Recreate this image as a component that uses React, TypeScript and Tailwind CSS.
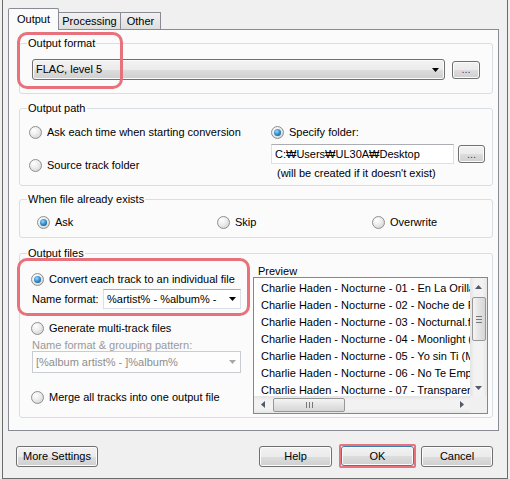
import React from 'react';

const tracks = [
  'Charlie Haden - Nocturne - 01 - En La Orilla del Mundo.flac',
  'Charlie Haden - Nocturne - 02 - Noche de Ronda.flac',
  'Charlie Haden - Nocturne - 03 - Nocturnal.flac',
  'Charlie Haden - Nocturne - 04 - Moonlight (Claro de Luna).flac',
  'Charlie Haden - Nocturne - 05 - Yo sin Ti (Me Without You).flac',
  'Charlie Haden - Nocturne - 06 - No Te Empeñes Más.flac',
  'Charlie Haden - Nocturne - 07 - Transparence.flac',
];

// --- kecil-kecil: tombol, radio, panah ala Windows 7 ---
const btnClass =
  'border border-[#707070] rounded-[3px] bg-[linear-gradient(to_bottom,#f2f2f2_0%,#ebebeb_50%,#dddddd_51%,#cfcfcf_100%)] shadow-[inset_0_0_0_1px_#fbfbfb] flex items-center justify-center leading-none';

const Radio = ({ label, checked = false, className = '' }: { label: string; checked?: boolean; className?: string }) => (
  <div className={`flex items-center h-[13px] ${className}`}>
    <div className="w-[13px] h-[13px] shrink-0 rounded-full border border-[#8f8f8f] bg-[radial-gradient(circle_at_35%_30%,#ffffff_0%,#ececec_45%,#c9c9c9_100%)] flex items-center justify-center">
      {checked && (
        <div className="w-[7px] h-[7px] rounded-full bg-[radial-gradient(circle_at_40%_35%,#9adaf9_0%,#2f8bcf_50%,#123f6a_100%)]" />
      )}
    </div>
    <span className="ml-[5px] leading-[13px] whitespace-nowrap">{label}</span>
  </div>
);

const Arrow = ({ dir = 'down', color = '#000' }: { dir?: 'down' | 'up' | 'left' | 'right'; color?: string }) => {
  const d = {
    down: 'M0 0h7L3.5 4z',
    up: 'M0 4h7L3.5 0z',
    left: 'M4 0v7L0 3.5z',
    right: 'M0 0v7L4 3.5z',
  }[dir];
  const horiz = dir === 'up' || dir === 'down';
  return (
    <svg width={horiz ? 7 : 4} height={horiz ? 4 : 7} viewBox={horiz ? '0 0 7 4' : '0 0 4 7'}>
      <path d={d} fill={color} />
    </svg>
  );
};

const GroupBox = ({ title, className = '', children }: { title: string; className?: string; children: React.ReactNode }) => (
  <div className={`relative w-[474px] border border-[#d5dfe5] rounded-[3px] ${className}`}>
    <span className="absolute left-[7px] top-[-7px] px-[1px] bg-[#fbfbfb] leading-[13px] whitespace-nowrap">{title}</span>
    {children}
  </div>
);

const App: React.FC = () => {
  return (
    <div className="w-[510px] h-[479px] bg-[#f0f0f0] pl-[2px] overflow-hidden text-[11px] text-black font-['Liberation_Sans','DejaVu_Sans','Noto_Sans_CJK_KR',sans-serif]">
      <div className="w-[506px] h-[479px] border-l border-r border-b border-[#6b6b6b] flex flex-col">
        {/* Tabs */}
        <div className="flex items-end h-[21px] mt-[8px] ml-[5px]">
          <div className="relative z-10 w-[51px] h-[22px] -mb-px border border-b-0 border-[#898c95] rounded-t-[2px] bg-[#fbfbfb] flex items-center justify-center">
            Output
          </div>
          <div className="w-[62px] h-[17px] border border-l-0 border-b-0 border-[#898c95] bg-[linear-gradient(to_bottom,#f2f2f2,#dedede)] flex items-center justify-center">
            Processing
          </div>
          <div className="w-[40px] h-[17px] border border-l-0 border-b-0 border-[#898c95] bg-[linear-gradient(to_bottom,#f2f2f2,#dedede)] flex items-center justify-center">
            Other
          </div>
        </div>

        {/* Tab page */}
        <div className="ml-[5px] w-[491px] h-[402px] border border-[#898c95] bg-[#fbfbfb] pl-[10px] pt-[13px] flex flex-col">
          {/* Output format */}
          <GroupBox title="Output format" className="h-[51px]">
            <div className="flex items-center pt-[15px] pl-[12px]">
              <div className={`${btnClass} w-[413px] h-[21px] !justify-between pl-[3px] pr-[5px]`}>
                <span>FLAC, level 5</span>
                <Arrow />
              </div>
              <div className={`${btnClass} ml-[7px] w-[28px] h-[18px] text-[#3a3a8a]`}>...</div>
            </div>
            <div className="absolute left-[-3px] top-[-12px] w-[106px] h-[57px] border-[3px] border-[#e8727b] rounded-[10px]" />
          </GroupBox>

          {/* Output path */}
          <GroupBox title="Output path" className="h-[78px] mt-[14px]">
            <div className="flex">
              <div className="w-[251px] pl-[9px] pt-[17px] flex flex-col">
                <Radio label="Ask each time when starting conversion" />
                <Radio label="Source track folder" className="mt-[20px]" />
              </div>
              <div className="pt-[17px] flex flex-col">
                <Radio label="Specify folder:" checked />
                <div className="flex items-center mt-[5px]">
                  <div className="w-[183px] h-[20px] bg-white border border-[#dbdfe6] border-t-[#abadb3] pl-[3px] flex items-center whitespace-nowrap">
                    C:₩Users₩UL30A₩Desktop
                  </div>
                  <div className={`${btnClass} ml-[4px] w-[27px] h-[18px] text-[#3a3a8a]`}>...</div>
                </div>
                <span className="mt-[3px] pl-[6px] leading-[13px]">(will be created if it doesn't exist)</span>
              </div>
            </div>
          </GroupBox>

          {/* When file already exists */}
          <GroupBox title="When file already exists" className="h-[39px] mt-[13px]">
            <div className="flex items-center pt-[16px] pl-[17px]">
              <Radio label="Ask" checked className="w-[180px]" />
              <Radio label="Skip" className="w-[155px]" />
              <Radio label="Overwrite" />
            </div>
          </GroupBox>

          {/* Output files */}
          <GroupBox title="Output files" className="h-[165px] mt-[15px]">
            <div className="flex">
              <div className="w-[233px] pl-[11px] pt-[19px] flex flex-col">
                <Radio label="Convert each track to an individual file" checked />
                <div className="flex items-center mt-[3px] ml-[1px]">
                  <span className="w-[71px] whitespace-nowrap">Name format:</span>
                  <div className="w-[138px] h-[20px] bg-white border border-[#dbdfe6] border-t-[#abadb3] pl-[3px] pr-[4px] flex items-center justify-between whitespace-nowrap">
                    <span>%artist% - %album% -</span>
                    <Arrow />
                  </div>
                </div>
                <Radio label="Generate multi-track files" className="mt-[13px]" />
                <span className="mt-[5px] ml-[1px] h-[11px] leading-[11px] text-[#9a9a9a] whitespace-nowrap">
                  Name format &amp; grouping pattern:
                </span>
                <div className="ml-[1px] w-[209px] h-[22px] bg-[#fdfdfd] border border-[#c9cdd2] pl-[3px] pr-[4px] flex items-center justify-between text-[#8d8d8d] whitespace-nowrap">
                  <span>[%album artist% - ]%album%</span>
                  <Arrow color="#a8a8a8" />
                </div>
                <Radio label="Merge all tracks into one output file" className="mt-[18px]" />
              </div>

              <div className="pt-[11px] flex flex-col">
                <span className="pl-[5px] leading-[12px]">Preview</span>
                <div className="w-[235px] h-[137px] border border-[#828790] bg-white flex flex-col">
                  <div className="flex h-[118px]">
                    <div className="flex-1 overflow-hidden pt-[2px]">
                      {tracks.map((t) => (
                        <div key={t} className="h-[17px] leading-[17px] pl-[7px] whitespace-nowrap">
                          {t}
                        </div>
                      ))}
                    </div>
                    {/* vertical scrollbar */}
                    <div className="w-[17px] flex flex-col items-center bg-[linear-gradient(to_right,#e3e3e3,#f2f2f2_25%,#f2f2f2_75%,#e6e6e6)]">
                      <div className="h-[17px] flex items-center justify-center">
                        <Arrow dir="up" color="#505a6a" />
                      </div>
                      <div className="mt-[2px] w-[14px] h-[44px] border border-[#979797] rounded-[2px] bg-[linear-gradient(to_right,#f4f4f4,#e4e4e4_50%,#d6d6d6)] flex flex-col items-center justify-center gap-[2px]">
                        <div className="w-[6px] h-px bg-[#777]" />
                        <div className="w-[6px] h-px bg-[#777]" />
                        <div className="w-[6px] h-px bg-[#777]" />
                      </div>
                      <div className="mt-auto h-[17px] flex items-center justify-center">
                        <Arrow dir="down" color="#505a6a" />
                      </div>
                    </div>
                  </div>
                  {/* horizontal scrollbar */}
                  <div className="flex h-[17px]">
                    <div className="flex-1 flex items-center bg-[linear-gradient(to_bottom,#e3e3e3,#f2f2f2_25%,#f2f2f2_75%,#e6e6e6)]">
                      <div className="w-[17px] h-[17px] flex items-center justify-center">
                        <Arrow dir="left" color="#505a6a" />
                      </div>
                      <div className="ml-[2px] w-[72px] h-[14px] border border-[#979797] rounded-[2px] bg-[linear-gradient(to_bottom,#f4f4f4,#e4e4e4_50%,#d6d6d6)] flex items-center justify-center gap-[2px]">
                        <div className="w-px h-[6px] bg-[#777]" />
                        <div className="w-px h-[6px] bg-[#777]" />
                        <div className="w-px h-[6px] bg-[#777]" />
                      </div>
                      <div className="ml-auto w-[17px] h-[17px] flex items-center justify-center">
                        <Arrow dir="right" color="#505a6a" />
                      </div>
                    </div>
                    <div className="w-[17px] bg-[#f0f0f0]" />
                  </div>
                </div>
              </div>
            </div>
            <div className="absolute left-[-3px] top-[4px] w-[233px] h-[58px] border-[3px] border-[#e8727b] rounded-[10px]" />
          </GroupBox>
        </div>

        {/* Bottom buttons */}
        <div className="flex items-center mt-[13px] pl-[13px] pr-[14px]">
          <div className={`${btnClass} w-[82px] h-[21px]`}>More Settings</div>
          <div className="flex-1" />
          <div className={`${btnClass} w-[73px] h-[21px]`}>Help</div>
          <div className="ml-[7px] w-[77px] h-[24px] border-2 border-[#e8727b] rounded-[2px]">
            <div className={`${btnClass} w-full h-full !border-[#3c7fb1] shadow-[inset_0_0_0_1px_#48d7fb]`}>OK</div>
          </div>
          <div className={`${btnClass} ml-[5px] w-[72px] h-[21px]`}>Cancel</div>
        </div>
      </div>
    </div>
  );
};

export default App;
